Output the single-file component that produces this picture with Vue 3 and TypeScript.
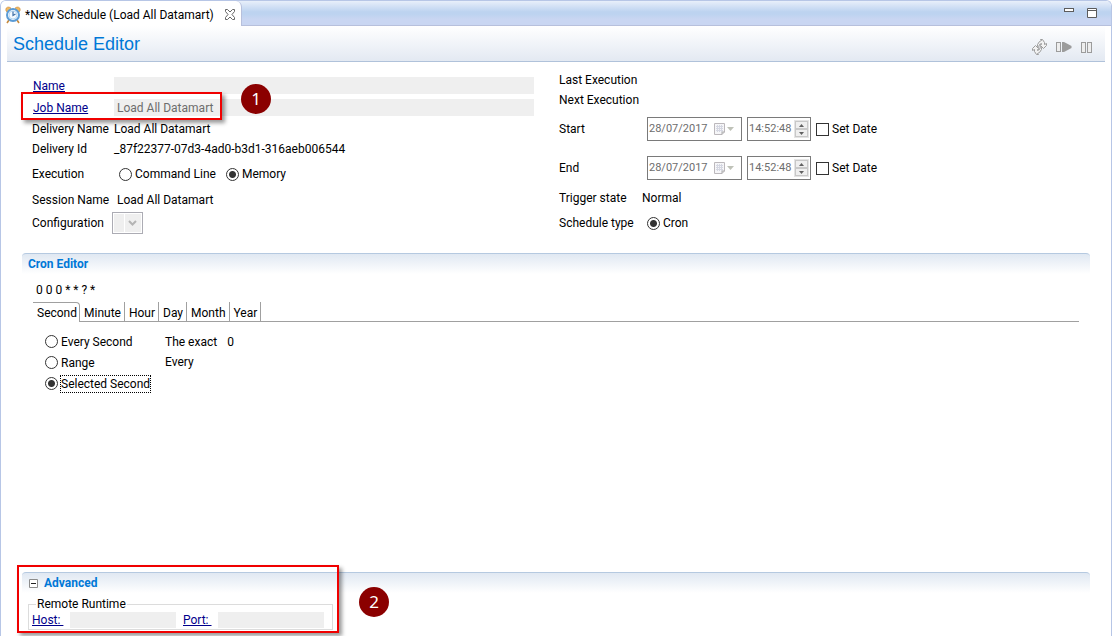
<script setup lang="ts">
import { ref } from 'vue'

interface DateRow {
  id: string
  label: string
  date: string
  time: string
  enabled: boolean
}

const jobName = ref('Load All Datamart')
const scheduleName = ref('')
const host = ref('')
const port = ref('')
const execution = ref('memory')
const scheduleType = ref('cron')
const mode = ref('selected')
const activeTab = ref('Second')
const expanded = ref(true)

const tabs: string[] = ['Second', 'Minute', 'Hour', 'Day', 'Month', 'Year']
const dates = ref<DateRow[]>([
  { id: 'start', label: 'Start', date: '28/07/2017', time: '14:52:48', enabled: false },
  { id: 'end', label: 'End', date: '28/07/2017', time: '14:52:48', enabled: false },
])
const modes = [
  { value: 'every', label: 'Every Second' },
  { value: 'range', label: 'Range' },
  { value: 'selected', label: 'Selected Second' },
]
</script>

<template>
  <div class="editor">
    <header class="strip">
      <div class="doc-tab">
        <svg class="clock" width="16" height="18" viewBox="0 0 16 18" aria-hidden="true">
          <path d="M1 5 Q0 1 4 1 L6 2 L2 6Z M15 5 Q16 1 12 1 L10 2 L14 6Z" fill="#f0b860" stroke="#c98a3c" stroke-width="0.6" />
          <path d="M4 14 L2 17 M12 14 L14 17" stroke="#c98a3c" stroke-width="1.6" />
          <circle cx="8" cy="9" r="6" fill="#f4faff" stroke="#5b9bd5" stroke-width="2" />
          <circle cx="8" cy="9" r="4" fill="none" stroke="#b9d9f2" stroke-width="1" />
          <path d="M8 5.5 V9.5 L10.5 8" fill="none" stroke="#3c6ea5" stroke-width="1.2" />
        </svg>
        <span>*New Schedule (Load All Datamart)</span>
        <button class="plain" aria-label="Close tab">
          <svg width="12" height="11" viewBox="0 0 12 11">
            <path d="M1.5 .5 H3.5 L6 3 L8.5 .5 H10.5 V2.5 L8 5.5 L10.5 8.5 V10.5 H8.5 L6 8 L3.5 10.5 H1.5 V8.5 L4 5.5 L1.5 2.5Z" fill="#fff" stroke="#666" />
          </svg>
        </button>
      </div>
      <div class="window-buttons">
        <button class="plain" aria-label="Minimize">
          <svg width="10" height="10" viewBox="0 0 10 10"><rect x=".5" y=".5" width="9" height="3" fill="#fff" stroke="#5c5c5c" /></svg>
        </button>
        <button class="plain" aria-label="Maximize">
          <svg width="10" height="10" viewBox="0 0 10 10"><path d="M.5 .5 H9.5 V9.5 H.5Z M.5 2.5 H9.5" fill="#fff" stroke="#5c5c5c" /></svg>
        </button>
      </div>
    </header>

    <div class="title-bar">
      <h1>Schedule Editor</h1>
      <div class="tools">
        <button class="plain" aria-label="Refresh" disabled>
          <svg width="15" height="16" viewBox="0 0 15 16" fill="#f2f2f2" stroke="#9c9c9c">
            <path d="M5.5 7.5 V5.5 L7.5 2.5 L9.5 1.5 L8.5 .5 H10.5 L12.5 3.5 V5.5 L14.5 4.5 V6.5 L11.5 9.5 L8.5 6.5 V5.5 H9.5 V4.5 L7.5 5.5 L6.5 8.5Z" />
            <path d="M9.5 8.5 V10.5 L7.5 13.5 L5.5 14.5 L6.5 15.5 H4.5 L2.5 12.5 V10.5 L.5 11.5 V9.5 L3.5 6.5 L6.5 9.5 V10.5 H5.5 V11.5 L7.5 10.5 L8.5 7.5Z" />
          </svg>
        </button>
        <button class="plain" aria-label="Run" disabled>
          <svg width="16" height="12" viewBox="0 0 16 12">
            <rect x=".5" y="1.5" width="4" height="9" fill="#eee" stroke="#9c9c9c" />
            <path d="M6 1 H8 L15.5 5 V7 L8 11 H6Z" fill="#9c9c9c" />
          </svg>
        </button>
        <button class="plain" aria-label="Pause" disabled>
          <svg width="12" height="12" viewBox="0 0 12 12" fill="#eee" stroke="#9c9c9c">
            <rect x=".5" y="1.5" width="4" height="10" /><rect x="6.5" y="1.5" width="4" height="10" />
          </svg>
        </button>
      </div>
    </div>

    <main>
      <div class="columns">
        <div class="left">
          <div class="row r22"><a id="name-label" href="#" class="lead">Name</a><input v-model="scheduleName" class="field" aria-labelledby="name-label" readonly></div>
          <div class="row r22"><a id="job-label" href="#" class="lead">Job Name</a><input v-model="jobName" class="field" aria-labelledby="job-label" readonly></div>
          <div class="row r20"><span class="name">Delivery Name</span><span>Load All Datamart</span></div>
          <div class="row r20"><span class="name">Delivery Id</span><span>_87f22377-07d3-4ad0-b3d1-316aeb006544</span></div>
          <div class="row r30">
            <span class="name">Execution</span>
            <div class="options">
              <label><input v-model="execution" type="radio" value="command">Command Line</label>
              <label><input v-model="execution" type="radio" value="memory">Memory</label>
            </div>
          </div>
          <div class="row r22"><span class="name">Session Name</span><span class="inset">Load All Datamart</span></div>
          <div class="row r24">
            <label class="name config" for="configuration">Configuration</label>
            <div class="combo">
              <select id="configuration" disabled></select>
              <svg width="9" height="6" viewBox="0 0 9 6" aria-hidden="true"><path d="M1 1 L4.5 4.5 L8 1" fill="none" stroke="#b4b4b4" stroke-width="2" /></svg>
            </div>
          </div>
          <div class="mark mark-job"></div>
          <div class="badge badge-job">1</div>
        </div>

        <div class="right">
          <div class="row r20">Last Execution</div>
          <div class="row r20">Next Execution</div>
          <div v-for="d in dates" :key="d.id" class="row r39">
            <span class="when">{{ d.label }}</span>
            <div class="box date">
              <input v-model="d.date" :aria-label="d.label + ' date'" disabled>
              <button class="plain" :aria-label="'Pick ' + d.label + ' date'" disabled>
                <svg width="21" height="14" viewBox="0 0 21 14">
                  <path d="M.5 1.5 H10.5 V10 L8 12.5 H.5Z" fill="#f6f6f8" stroke="#bcb8bc" />
                  <path d="M2 4.5 H9 M2 6.5 H9 M2 8.5 H9 M3.5 3 V10 M5.5 3 V10 M7.5 3 V10" stroke="#d5d7e2" />
                  <path d="M8 12.5 V10 H10.5" fill="none" stroke="#aaa" />
                  <path d="M13 5 H20 L16.5 9Z" fill="#bfc2b8" />
                </svg>
              </button>
            </div>
            <div class="box time">
              <input v-model="d.time" :aria-label="d.label + ' time'" disabled>
              <div class="spin">
                <button aria-label="Increase" disabled><svg width="5" height="3" viewBox="0 0 5 3"><path d="M0 3 L2.5 0 L5 3Z" fill="#606060" /></svg></button>
                <button aria-label="Decrease" disabled><svg width="5" height="3" viewBox="0 0 5 3"><path d="M0 0 L2.5 3 L5 0Z" fill="#606060" /></svg></button>
              </div>
            </div>
            <label><input v-model="d.enabled" type="checkbox">Set Date</label>
          </div>
          <div class="row r20"><span class="state">Trigger state</span><span>Normal</span></div>
          <div class="row r30"><span class="when">Schedule type</span><label><input v-model="scheduleType" type="radio" value="cron">Cron</label></div>
        </div>
      </div>

      <section class="cron">
        <h2>Cron Editor</h2>
        <div class="cron-body">
          <p class="expression">0 0 0 * * ? *</p>
          <div class="tabs" role="tablist">
            <button v-for="t in tabs" :key="t" role="tab" :aria-selected="t === activeTab" :class="{ active: t === activeTab }" @click="activeTab = t">{{ t }}</button>
            <span class="rule"></span>
          </div>
          <div class="panel">
            <div class="modes">
              <label v-for="m in modes" :key="m.value"><input v-model="mode" type="radio" :value="m.value"><span :class="{ focused: m.value === mode }">{{ m.label }}</span></label>
            </div>
            <div class="detail">
              <div>The exact<span class="exact">0</span></div>
              <div>Every</div>
            </div>
          </div>
        </div>
      </section>

      <section class="advanced">
        <h2>
          <button class="plain toggle" :aria-expanded="expanded" aria-label="Toggle Advanced" @click="expanded = !expanded">
            <svg width="9" height="9" viewBox="0 0 9 9"><path d="M.5 .5 H8.5 V8.5 H.5Z" fill="#fff" stroke="#8c8c8c" /><path d="M2 4.5 H7" stroke="#222" /></svg>
          </button>
          Advanced
        </h2>
        <fieldset v-show="expanded">
          <legend>Remote Runtime</legend>
          <a id="host-label" href="#" class="host">Host: </a><input v-model="host" class="field" aria-labelledby="host-label" readonly>
          <a id="port-label" href="#" class="port">Port: </a><input v-model="port" class="field" aria-labelledby="port-label" readonly>
        </fieldset>
        <div class="mark mark-advanced"></div>
        <div class="badge badge-advanced">2</div>
      </section>
    </main>
  </div>
</template>

<style>
body {
  background: #fff;
}
</style>

<style scoped>
.editor {
  box-sizing: border-box;
  display: flex;
  flex-direction: column;
  min-height: 100vh;
  border: solid #b7c6e6;
  border-width: 1px 1px 0;
  border-radius: 6px 6px 0 0;
  font: 12px/16px "Segoe UI", Roboto, "Open Sans", sans-serif;
  color: #000;
}
.editor * {
  box-sizing: border-box;
}
input, select, button {
  font: inherit;
  color: inherit;
  margin: 0;
  padding: 0;
}
svg {
  display: block;
}
.plain {
  border: 0;
  background: none;
}
.strip {
  display: flex;
  justify-content: space-between;
  height: 25px;
  border-bottom: 1px solid #b7c0dc;
  border-radius: 5px 5px 0 0;
  background: linear-gradient(#e8effa, #bdd3f0 45%, #bdd3f0 55%, #c9d6f2 75%, #c9d6f2);
}
.doc-tab {
  display: flex;
  align-items: center;
  gap: 4px;
  height: 25px;
  padding: 2px 5px 0 4px;
  border-right: 1px solid #b7c0dc;
  border-radius: 5px 6px 0 0;
  background: #fff;
  white-space: nowrap;
}
.doc-tab .plain {
  padding-left: 6px;
}
.window-buttons {
  display: flex;
  gap: 13px;
  padding: 7px 14px 0 0;
}
.window-buttons .plain {
  height: 10px;
}
.title-bar {
  display: flex;
  align-items: center;
  justify-content: space-between;
  height: 36px;
  margin: 0 6px;
  padding: 0 12px 0 6px;
  border-bottom: 1px solid #b0c2da;
  background: linear-gradient(#fff, #e3e9f2);
}
h1 {
  margin: 0;
  font: 18px/20px "Liberation Sans", Arial, sans-serif;
  color: #0078d7;
}
.tools {
  display: flex;
  align-items: center;
  gap: 9px;
  padding-top: 6px;
}
main {
  display: flex;
  flex: 1;
  flex-direction: column;
  padding: 0 21px 6px;
}
.columns {
  display: grid;
  grid-template-columns: 1fr 1fr;
}
.left {
  position: relative;
  padding: 13px 22px 0 10px;
}
.right {
  padding: 8px 0 0 3px;
}
.row {
  display: flex;
  align-items: center;
  white-space: nowrap;
}
.r20 { height: 20px; }
.r22 { height: 22px; }
.r24 { height: 24px; }
.r30 { height: 30px; }
.r39 {
  height: 39px;
  padding-bottom: 1px;
}
.name {
  flex: 0 0 82px;
}
.lead {
  flex: 0 0 82px;
  padding-left: 1px;
}
.config {
  flex-basis: 80px;
}
.inset {
  padding-left: 3px;
}
a {
  color: #00008b;
  text-underline-offset: 1px;
  white-space: pre;
}
.field {
  flex: 1;
  width: 0;
  min-width: 0;
  height: 17px;
  margin-bottom: 1px;
  padding: 0 3px;
  border: 0;
  border-radius: 0;
  background: #efefef;
  color: #6d6d6d;
}
label {
  display: inline-flex;
  align-items: center;
}
.options {
  display: flex;
  gap: 10px;
  padding-left: 5px;
}
input[type="radio"], input[type="checkbox"] {
  appearance: none;
  width: 13px;
  height: 13px;
  margin-right: 3px;
  border: 1px solid #333;
  background: #fff;
}
input[type="radio"] {
  border-radius: 50%;
}
input[type="radio"]:checked {
  background: radial-gradient(circle, #333 3px, #fff 4px);
}
.combo {
  display: flex;
  position: relative;
  width: 31px;
  height: 22px;
  border: 1px solid #acacb4;
}
.combo select {
  appearance: none;
  width: 100%;
  border: 1px solid #fff;
  border-radius: 0;
  background: linear-gradient(90deg, #efefef 10px, #fff 10px, #fff 11px, #efefef 11px);
  opacity: 1;
}
.combo svg {
  position: absolute;
  top: 7px;
  right: 5px;
  pointer-events: none;
}
.when {
  flex: 0 0 88px;
}
.state {
  flex: 0 0 83px;
}
.box {
  display: flex;
  align-items: center;
  height: 24px;
  margin-right: 5px;
  border: 1px solid #7a7a7a;
  color: #6d6d6d;
}
.box input {
  flex: 1;
  min-width: 0;
  padding-left: 1px;
  border: 0;
  background: none;
  font-size: 11px;
}
.date {
  width: 95px;
  padding-right: 6px;
}
.time {
  width: 64px;
  padding-right: 1px;
}
.spin {
  display: grid;
  width: 15px;
  height: 18px;
  border: 1px solid #e4e4e4;
}
.spin button {
  display: grid;
  place-items: center;
  border: 1px solid #c8c8c8;
  background: #efefef;
}
.cron {
  flex: 1;
  margin-top: 15px;
}
h2 {
  display: flex;
  align-items: center;
  gap: 6px;
  height: 21px;
  margin: 0;
  padding-left: 6px;
  border-top: 1px solid #b5c9e0;
  border-radius: 4px 4px 0 0;
  background: linear-gradient(#e0e8f2, #fff);
  font-size: 12px;
  line-height: 16px;
  color: #0078d7;
}
.cron-body {
  padding: 8px 11px 0;
}
.expression {
  margin: 0 3px 4px;
}
.tabs {
  display: flex;
  height: 20px;
}
.tabs button {
  padding: 2px 3px 0 4px;
  border: solid #a0a0a0;
  border-width: 0 1px 1px 0;
  background: #fff;
}
.tabs .active {
  padding: 1px 2px 0 4px;
  border-width: 1px 1px 0 0;
  border-top-right-radius: 4px;
}
.rule {
  flex: 1;
  border-bottom: 1px solid #a0a0a0;
}
.panel {
  display: flex;
  padding: 9px 0 0 12px;
}
.modes {
  display: flex;
  flex-direction: column;
  flex: 0 0 120px;
}
.modes label {
  height: 21px;
}
.modes input {
  flex: none;
}
.modes span {
  white-space: nowrap;
}
.focused {
  outline: 1px dotted #000;
}
.detail {
  padding-top: 1px;
  line-height: 20px;
}
.exact {
  padding-left: 10px;
}
.advanced {
  position: relative;
}
.advanced h2 {
  padding-left: 7px;
}
fieldset {
  display: flex;
  align-items: center;
  width: 305px;
  margin: 3px 0 0 6px;
  padding: 0 8px 1px 3px;
  border: 1px solid #dcdcdc;
}
legend {
  padding: 0 1px;
  margin-left: 4px;
}
fieldset .field {
  height: 16px;
  margin-bottom: 0;
}
.host {
  flex: 0 0 38px;
}
.port {
  flex: 0 0 35px;
  margin-left: 7px;
}
.mark {
  position: absolute;
  border: 2px solid #f00000;
  box-shadow: 3px 3px 4px #0006;
  pointer-events: none;
}
.mark-job {
  top: 30px;
  left: -1px;
  width: 201px;
  height: 28px;
}
.mark-advanced {
  top: -7px;
  left: -5px;
  width: 322px;
  height: 68px;
}
.badge {
  position: absolute;
  display: grid;
  place-items: center;
  width: 30px;
  height: 30px;
  border-radius: 50%;
  background: #8b0000;
  font: 17px/20px "Noto Sans", sans-serif;
  color: #fff;
}
.badge-job {
  top: 22px;
  left: 219px;
}
.badge-advanced {
  top: 15px;
  left: 337px;
}
</style>
